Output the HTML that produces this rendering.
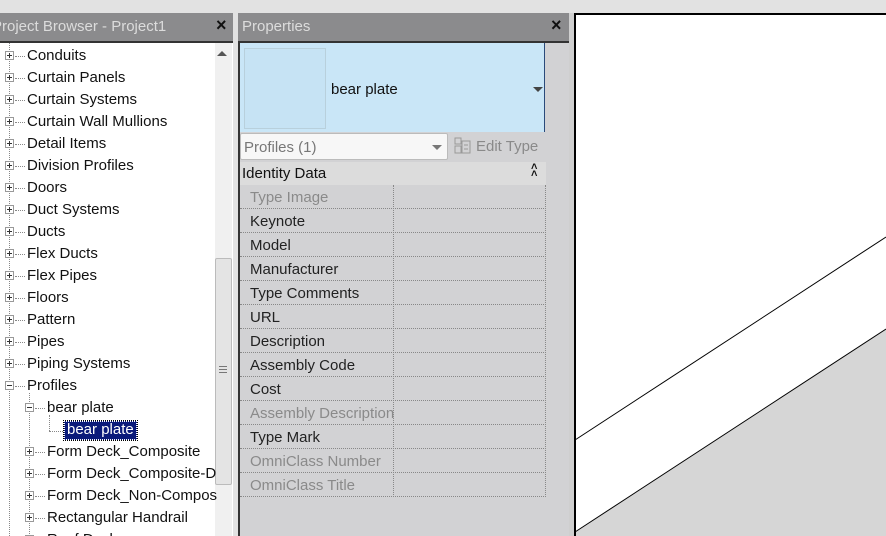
<!DOCTYPE html>
<html><head><meta charset="utf-8"><style>
*{margin:0;padding:0;box-sizing:border-box}
html,body{width:886px;height:536px;overflow:hidden}
body{background:#e2e2e2;font-family:"Liberation Sans","DejaVu Sans",sans-serif;position:relative}
.a{position:absolute}
.t{position:absolute;font-size:15px;color:#111;white-space:nowrap;line-height:22px}
.box{position:absolute;width:9px;height:9px;border:1px solid #999;background:#fff}
.box:before{content:"";position:absolute;left:1px;top:3px;width:5px;height:1px;background:#333}
.box.p:after{content:"";position:absolute;left:3px;top:1px;width:1px;height:5px;background:#333}
.hd{position:absolute;height:0;border-top:1px dotted #888;width:10px}
.vd{position:absolute;width:0;border-left:1px dotted #888}
.r{position:absolute;left:240px;width:306px;height:24px;border-bottom:1px dotted #888}
.r span{position:absolute;left:10px;top:4px;font-size:15px;color:#222;white-space:nowrap}
.r.g span{color:#8a8a8a}
</style></head><body>
<div class="a" style="left:0;top:13px;width:233px;height:28px;background:#8b8b8d"></div>
<div class="a" style="left:-8px;top:18px;color:#dcdcdc;font-size:15px">Project Browser - Project1</div>
<div class="a" style="left:216px;top:15px;font-size:18px;font-weight:bold;color:#111">×</div>
<div class="a" style="left:238px;top:13px;width:331px;height:28px;background:#8b8b8d"></div>
<div class="a" style="left:242px;top:18px;color:#dcdcdc;font-size:15px">Properties</div>
<div class="a" style="left:551px;top:15px;font-size:18px;font-weight:bold;color:#111">×</div>
<div class="a" style="left:0;top:41px;width:233px;height:495px;background:#fff;border-top:2px solid #333"></div>
<div class="a" style="left:215px;top:43px;width:17px;height:493px;background:#f0f0f0"></div>
<div class="a" style="left:217px;top:51px;width:0;height:0;border-left:5px solid transparent;border-right:5px solid transparent;border-bottom:5px solid #555"></div>
<div class="a" style="left:215px;top:258px;width:17px;height:227px;background:#e4e4e4;border:1px solid #bbb;border-radius:2px"></div>
<div class="a" style="left:219px;top:366px;width:8px;height:1px;background:#777;box-shadow:0 3px #777,0 6px #777"></div>
<div class="vd" style="left:9px;top:43px;height:493px"></div>
<div class="vd" style="left:29px;top:393px;height:145px"></div>
<div class="vd" style="left:49px;top:415px;height:16px"></div>
<div class="hd" style="left:49px;top:431px;width:16px"></div>
<div id="tree"></div>
<div class="a" style="left:64px;top:421px;width:73px;height:19px;background:#0a1a7a;border:1px dotted #fff;outline:1px dotted #000"></div>
<div class="t" style="left:67px;top:419px;color:#fff">bear plate</div>
<div class="a" style="left:238px;top:41px;width:331px;height:495px;background:#d2d2d4;border-left:2px solid #333;border-top:2px solid #333"></div>
<div class="a" style="left:240px;top:43px;width:305px;height:89px;background:#c9e6f7;border-right:1px solid #2a4a7a"></div>
<div class="a" style="left:244px;top:48px;width:82px;height:81px;border:1px solid #b8d0dc;background:#c6e3f4"></div>
<div class="a" style="left:331px;top:81px;font-size:15px;color:#111">bear plate</div>
<div class="a" style="left:533px;top:87px;border-left:5px solid transparent;border-right:5px solid transparent;border-top:5px solid #444"></div>
<div class="a" style="left:240px;top:133px;width:208px;height:27px;background:#f7f7f7;border:1px solid #bbb;border-radius:2px"></div>
<div class="a" style="left:244px;top:139px;font-size:15px;color:#777">Profiles (1)</div>
<div class="a" style="left:432px;top:145px;border-left:5px solid transparent;border-right:5px solid transparent;border-top:5px solid #777"></div>
<svg class="a" style="left:454px;top:137px" width="18" height="18"><rect x="1" y="1" width="6" height="6" fill="none" stroke="#999"/><rect x="1" y="9" width="6" height="7" fill="none" stroke="#999"/><rect x="8" y="4" width="8" height="12" fill="none" stroke="#999"/><line x1="10" y1="8" x2="14" y2="8" stroke="#999"/><line x1="10" y1="12" x2="14" y2="12" stroke="#999"/></svg>
<div class="a" style="left:476px;top:138px;font-size:15px;color:#8a8a8a">Edit Type</div>
<div class="a" style="left:240px;top:162px;width:306px;height:23px;background:#dcdcdc"></div>
<div class="a" style="left:242px;top:165px;font-size:15px;color:#111">Identity Data</div>
<div class="a" style="left:531px;top:164px;font-size:11px;font-weight:bold;color:#111;line-height:7px">˄<br>˄</div>
<div id="rows"></div>
<div class="a" style="left:393px;top:185px;width:0;height:312px;border-left:1px dotted #888"></div>
<div class="a" style="left:545px;top:185px;width:0;height:312px;border-left:1px dotted #888"></div>
<div class="a" style="left:569px;top:13px;width:5px;height:523px;background:#cfcfcf"></div>
<svg class="a" style="left:574px;top:13px" width="312" height="523">
<rect x="0" y="0" width="312" height="523" fill="#fff"/>
<polygon points="1,519 312,316 312,523 1,523" fill="#d6d6d6"/>
<line x1="1" y1="427" x2="312" y2="224" stroke="#000" stroke-width="1"/>
<line x1="1" y1="519" x2="312" y2="316" stroke="#000" stroke-width="1"/>
<line x1="1" y1="0" x2="1" y2="523" stroke="#000" stroke-width="2"/>
<line x1="0" y1="1" x2="312" y2="1" stroke="#000" stroke-width="2"/>
</svg>
<script>
var items=[[0,"Conduits","p"],[0,"Curtain Panels","p"],[0,"Curtain Systems","p"],[0,"Curtain Wall Mullions","p"],[0,"Detail Items","p"],[0,"Division Profiles","p"],[0,"Doors","p"],[0,"Duct Systems","p"],[0,"Ducts","p"],[0,"Flex Ducts","p"],[0,"Flex Pipes","p"],[0,"Floors","p"],[0,"Pattern","p"],[0,"Pipes","p"],[0,"Piping Systems","p"],[0,"Profiles","m"],[1,"bear plate","m"],[2,"",""],[1,"Form Deck_Composite","p"],[1,"Form Deck_Composite-D","p"],[1,"Form Deck_Non-Compos","p"],[1,"Rectangular Handrail","p"],[1,"Roof Deck","p"]];
var h="";items.forEach(function(it,i){var y=45+i*22;var x=5+it[0]*20;if(it[0]<2){h+='<div class="box '+(it[2]=="p"?"p":"")+'" style="left:'+x+'px;top:'+(y+6)+'px"></div><div class="hd" style="left:'+(x+10)+'px;top:'+(y+11)+'px"></div><div class="t" style="left:'+(x+22)+'px;top:'+y+'px">'+it[1]+'</div>';}});
document.getElementById("tree").outerHTML=h;
var rows=[["Type Image",1],["Keynote"],["Model"],["Manufacturer"],["Type Comments"],["URL"],["Description"],["Assembly Code"],["Cost"],["Assembly Description",1],["Type Mark"],["OmniClass Number",1],["OmniClass Title",1]];
var r="";rows.forEach(function(x,i){r+='<div class="r'+(x[1]?' g':'')+'" style="top:'+(185+i*24)+'px"><span>'+x[0]+'</span></div>';});
document.getElementById("rows").outerHTML=r;
</script>
</body></html>
